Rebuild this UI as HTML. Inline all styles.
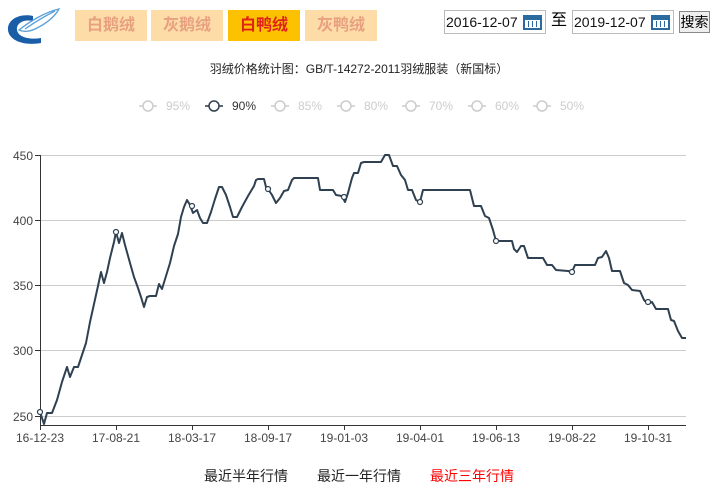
<!DOCTYPE html>
<html><head><meta charset="utf-8"><style>
body{margin:0;width:718px;height:498px;background:#fff;font-family:"Liberation Sans","Noto Sans CJK SC",sans-serif;position:relative;overflow:hidden}
.b{position:absolute;top:10px;height:31px;width:72px;background:#fddca8;color:#e8a080;font-size:16px;line-height:31px;text-align:center;font-weight:bold}
.a{background:#fcc200;color:#e0201a}
.in{position:absolute;top:10px;height:22px;border:1px solid #bbb;font-size:14px;line-height:22px;color:#111;padding-left:1px;box-sizing:content-box}
.cal{position:absolute;right:3px;top:4px;width:19px;height:15px;background:#2a6aa0}
.cal i{position:absolute;left:2px;top:5px;width:15px;height:8px;background:#fff}
.cal b{position:absolute;left:5px;top:6px;width:1px;height:6px;background:#2a6aa0;box-shadow:4px 0 #2a6aa0,8px 0 #2a6aa0}
.t{position:absolute;font-size:14px;color:#222;top:466px}
</style></head><body>
<svg style="position:absolute;left:5px;top:8px" width="56" height="38" viewBox="0 0 56 38">
<path d="M28 8 C14 5 2 12 3 22 C4 33 20 38 36 35 L36 30 C24 32 13 29 12 22 C11 15 19 11 28 13 Z" fill="#1a5ea8"/>
<path d="M14 22 C24 14 40 4 54 1 C50 8 42 15 32 20 C25 24 18 24 14 22Z M20 21 C30 14 40 8 50 3" fill="none" stroke="#5aa0d8" stroke-width="1.3"/>
</svg>
<div class="b" style="left:75px">白鹅绒</div>
<div class="b" style="left:151px">灰鹅绒</div>
<div class="b a" style="left:228px">白鸭绒</div>
<div class="b" style="left:305px">灰鸭绒</div>
<div class="in" style="left:444px;width:99px">2016-12-07<div class="cal"><i></i><b></b></div></div>
<div style="position:absolute;left:551px;top:10px;font-size:16px;line-height:22px">至</div>
<div class="in" style="left:572px;width:99px">2019-12-07<div class="cal"><i></i><b></b></div></div>
<div style="position:absolute;left:679px;top:11px;width:29px;height:20px;border:1px solid #888;background:#eee;font-size:14px;line-height:20px;text-align:center">搜索</div>
<div style="position:absolute;left:0;width:718px;top:60px;text-align:center;font-size:12px;color:#222">羽绒价格统计图：GB/T-14272-2011羽绒服装（新国标）</div>
<svg style="position:absolute;left:0;top:0" width="718" height="498">
<g font-family="Liberation Sans,sans-serif" font-size="12" fill="#ccc">
<g stroke="#ccc" stroke-width="1.5" fill="#fff">
<path d="M139 106h18M205 106h18M271 106h18M337 106h18M402 106h18M468 106h18M533 106h18"/>
<circle cx="148" cy="106" r="5"/><circle cx="214" cy="106" r="5" stroke="#2f4050"/><circle cx="280" cy="106" r="5"/><circle cx="346" cy="106" r="5"/><circle cx="411" cy="106" r="5"/><circle cx="477" cy="106" r="5"/><circle cx="542" cy="106" r="5"/>
</g>
<path d="M205 106h4M219 106h4" stroke="#2f4050" stroke-width="1.5"/>
<text x="166" y="110">95%</text><text x="232" y="110" fill="#333">90%</text><text x="298" y="110">85%</text><text x="364" y="110">80%</text><text x="429" y="110">70%</text><text x="495" y="110">60%</text><text x="560" y="110">50%</text>
</g>
<g stroke="#ccc"><path d="M40 155.5H686M40 220.5H686M40 285.5H686M40 350.5H686M40 416.5H686"/></g>
<g stroke="#333"><path d="M40.5 155V425M35 155.5h5M35 220.5h5M35 285.5h5M35 350.5h5M35 416.5h5M40 425.5H686"/>
<path d="M40.5 425v5M116.5 425v5M192.5 425v5M268.5 425v5M344.5 425v5M420.5 425v5M496.5 425v5M572.5 425v5M648.5 425v5"/></g>
<g font-family="Liberation Sans,sans-serif" font-size="12" fill="#444" text-anchor="end">
<text x="33" y="160">450</text><text x="33" y="225">400</text><text x="33" y="290">350</text><text x="33" y="355">300</text><text x="33" y="421">250</text></g>
<g font-family="Liberation Sans,sans-serif" font-size="12" fill="#444" text-anchor="middle">
<text x="40" y="442">16-12-23</text><text x="116" y="442">17-08-21</text><text x="192" y="442">18-03-17</text><text x="268" y="442">18-09-17</text><text x="344" y="442">19-01-03</text><text x="420" y="442">19-04-01</text><text x="496" y="442">19-06-13</text><text x="572" y="442">19-08-22</text><text x="648" y="442">19-10-31</text></g>
<polyline fill="none" stroke="#2f4050" stroke-width="2" stroke-linejoin="round" points="40,412 44,424 47,413 52,413 57,400 62,382 67,367 70,377 74,367 78,367 82,355 86,343 90,322 94,304 98,286 101,272 104,283 107,272 110,258 114,242 116,232 119,243 122,233 125,245 130,263 134,277 138,288 141,297 144,307 147,297 150,296 156,296 159,284 162,289 166,276 170,263 174,246 178,234 181,217 184,207 187,200 190,205 193,213 197,210 200,218 203,223 207,223 211,212 215,199 219,187 222,187 226,195 230,207 233,217 237,217 242,207 248,196 254,186 256,180 258,179 264,179 266,187 268,189 272,195 276,203 280,198 284,191 288,190 292,180 294,178 318,178 320,190 333,190 336,195 342,196 345,202 348,193 352,178 354,173 358,173 361,163 364,162 381,162 385,155 389,155 393,166 397,166 401,175 405,180 408,190 412,190 416,200 420,202 423,190 470,190 474,206 481,206 485,216 489,218 493,230 496,241 512,241 514,249 517,252 521,246 524,246 528,258 543,258 547,265 552,265 556,270 568,271 572,272 575,265 595,265 598,258 602,257 606,251 609,258 612,271 620,271 624,283 628,285 632,290 640,291 644,300 648,304 652,302 656,309 668,309 671,320 674,321 678,331 682,338 686,338"/>
<g fill="#fff" stroke="#2f4050" stroke-width="1.2">
<circle cx="40" cy="412" r="2.5"/><circle cx="116" cy="232" r="2.5"/><circle cx="192" cy="206" r="2.5"/><circle cx="268" cy="189" r="2.5"/><circle cx="344" cy="197" r="2.5"/><circle cx="420" cy="202" r="2.5"/><circle cx="496" cy="241" r="2.5"/><circle cx="572" cy="272" r="2.5"/><circle cx="648" cy="302" r="2.5"/></g>
</svg>
<div class="t" style="left:204px">最近半年行情</div>
<div class="t" style="left:317px">最近一年行情</div>
<div class="t" style="left:430px;color:#f00">最近三年行情</div>
</body></html>
